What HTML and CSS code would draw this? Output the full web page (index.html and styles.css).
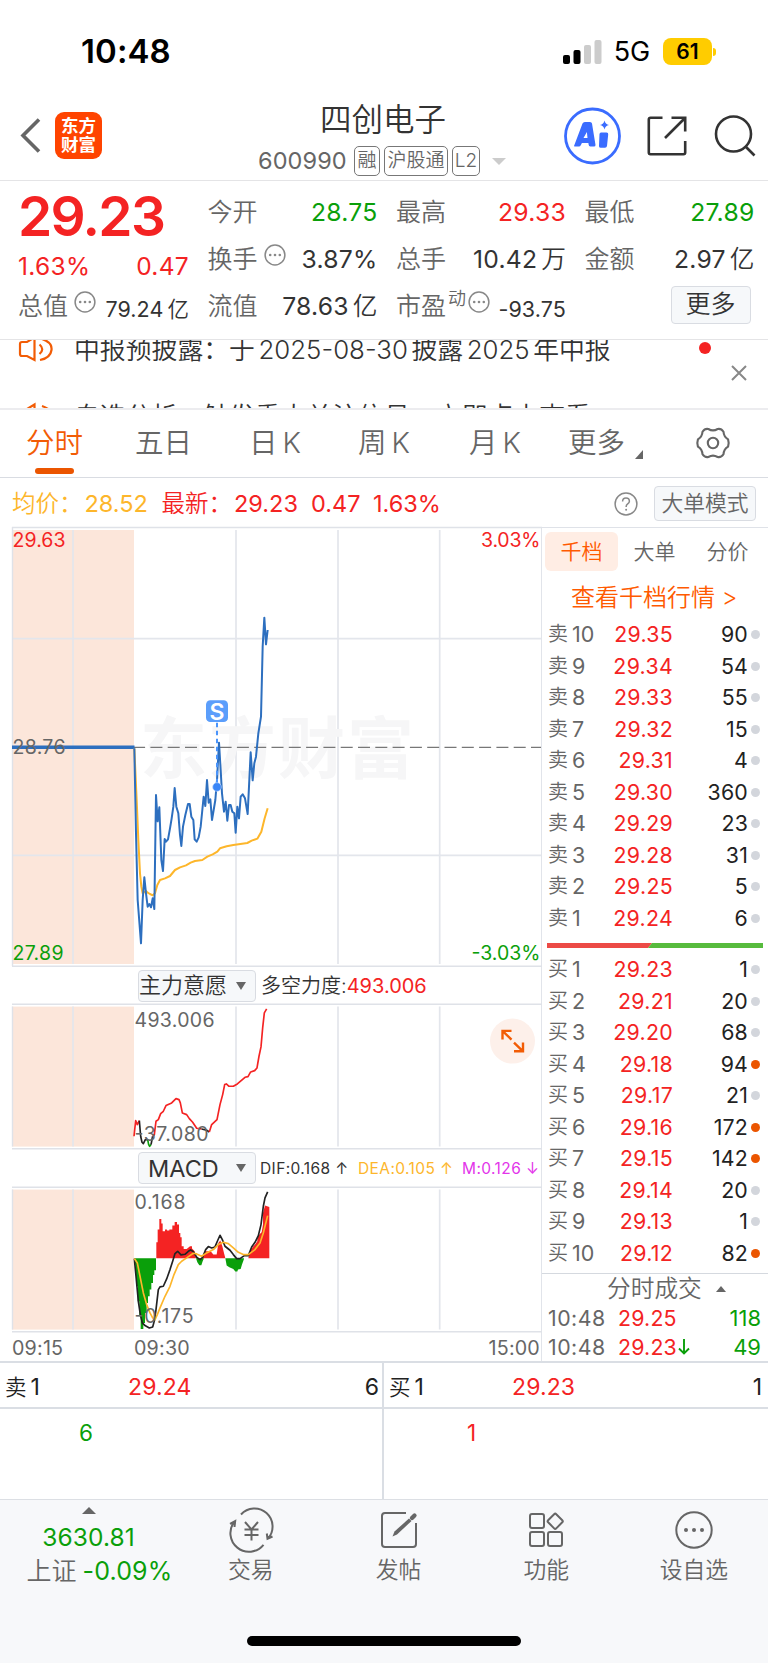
FILE: index.html
```html
<!DOCTYPE html>
<html lang="zh-CN">
<head>
<meta charset="utf-8">
<title>四创电子 600990</title>
<link rel="stylesheet" href="styles.css">
</head>
<body>
<div class="app">
  <div class="status">
    <span class="clock">10:48</span>
    <svg class="signal" width="40" height="26" viewBox="0 0 40 26"><rect x="1" y="16" width="7" height="9" rx="2"/><rect x="11.500" y="11" width="7" height="14" rx="2"/><rect class="dim" x="22" y="6" width="7" height="19" rx="2"/><rect class="dim" x="32.500" y="1" width="7" height="24" rx="2"/></svg>
    <span class="net">5G</span>
    <span class="battery">61</span><i class="battery-cap"></i>
  </div>

  <header class="head">
    <div class="head-left">
      <svg width="22" height="36" viewBox="0 0 22 36" fill="none" stroke="#666" stroke-width="3.6"><path d="M20 1.500 4 17.500l16 16"/></svg>
      <div class="logo"><span>东方</span><span>财富</span></div>
    </div>
    <div class="head-mid">
      <div class="name">四创电子</div>
      <div class="code-row"><span class="code">600990</span><span class="tag t1">融</span><span class="tag t2">沪股通</span><span class="tag t3">L2</span><i class="tri-down"></i></div>
    </div>
    <div class="head-right">
      <svg width="58" height="58" viewBox="0 0 58 58"><circle cx="29.500" cy="29" r="27" fill="none" stroke="#3a6cff" stroke-width="2.800"/><path fill="#3a6cff" fill-rule="evenodd" d="M11 39 19.500 16.500q.7-1.500 2.300-1.500H27q1.700 0 2 1.500L32.500 38q0 1.500-1.500 1.500h-3.600q-1.600 0-1.800-2l-.2-1.500h-6.500l-1 2q-.7 1.500-2 1.500H12q-1.500 0-1-1.500ZM20.500 31h4l-.6-6ZM38 25.500h5.500q2 0 1.700 2L44 39q-.3 1.700-2 1.700h-4.500q-1.800 0-1.500-1.900L36.500 27q.2-1.500 1.500-1.500ZM41.500 13.500q.8 3.700 4.500 4.500-3.700.8-4.500 4.500-.8-3.700-4.500-4.500 3.700-.8 4.500-4.500Z"/></svg>
      <svg width="42" height="42" viewBox="0 0 42 42" fill="none" stroke="#333" stroke-width="2.600"><path d="M16.500 2.800H4.500Q2.800 2.800 2.800 4.500V37.500q0 1.700 1.700 1.700H37.500q1.700 0 1.700-1.700V26M25.500 2.800H39.200V16.500M38.500 3.500 19 23"/></svg>
      <svg width="42" height="42" viewBox="0 0 42 42" fill="none" stroke="#333" stroke-width="2.600"><circle cx="19.500" cy="19" r="17.500"/><path d="M31.500 31.500 40.500 40.500"/></svg>
    </div>
  </header>

  <section class="quote">
    <div class="q-price">
      <div class="big red">29.23</div>
      <div class="cell mid red"><span>1.63%</span><span>0.47</span></div>
      <div class="cell"><label>总值</label><svg class="info" width="22" height="22" viewBox="0 0 22 22"><use href="#more-dots"/></svg><b class="small">79.24<em>亿</em></b></div>
    </div>
    <div class="q-col">
      <div class="cell"><label>今开</label><b class="green">28.75</b></div>
      <div class="cell"><label>换手</label><svg class="info" width="22" height="22" viewBox="0 0 22 22"><use href="#more-dots"/></svg><b>3.87%</b></div>
      <div class="cell"><label>流值</label><b>78.63<em>亿</em></b></div>
    </div>
    <div class="q-col">
      <div class="cell"><label>最高</label><b class="red">29.33</b></div>
      <div class="cell"><label>总手</label><b>10.42<em>万</em></b></div>
      <div class="cell"><label>市盈</label><sup>动</sup><svg class="info tight" width="22" height="22" viewBox="0 0 22 22"><g id="more-dots"><circle cx="11" cy="11" r="9.900" fill="none" stroke="#888" stroke-width="1.500"/><g fill="#888"><circle cx="6.200" cy="11" r="1.300"/><circle cx="11" cy="11" r="1.300"/><circle cx="15.800" cy="11" r="1.300"/></g></g></svg><b class="small">-93.75</b></div>
    </div>
    <div class="q-col">
      <div class="cell"><label>最低</label><b class="green">27.89</b></div>
      <div class="cell"><label>金额</label><b>2.97<em>亿</em></b></div>
      <div class="cell end"><button class="more-btn">更多</button></div>
    </div>
  </section>

  <section class="notice">
    <div class="notice-row"><svg class="horn" width="36" height="26" viewBox="0 0 36 26"><g id="horn" fill="none" stroke="#f25c05" stroke-width="2.200"><path d="M16.500 1.500V24L9 20H4Q2 20 2 18V8Q2 6 4 6H9ZM21.500 8.500q5.500 4.500 0 9.500M24 3q10.500 3.500 9.500 11-1 8-11.500 10"/></g></svg><p>中报预披露：于<i class="gap"></i>2025-08-30<i class="gap"></i>披露<i class="gap"></i>2025<i class="gap"></i>年中报</p></div>
    <div class="notice-row"><svg class="horn" width="36" height="26" viewBox="0 0 36 26"><use href="#horn"/></svg><p>自选分析：触发重大关注信号，立即点击查看</p></div>
    <i class="dot-red"></i>
    <svg class="close" width="18" height="18" viewBox="0 0 18 18" stroke="#888" stroke-width="2"><path d="M2 2 16 16M16 2 2 16"/></svg>
  </section>

  <nav class="tabs">
    <span class="tab on">分时</span><span class="tab">五日</span><span class="tab">日 K</span><span class="tab">周 K</span><span class="tab">月 K</span><span class="tab more">更多<i></i></span>
    <svg width="34" height="34" viewBox="-17 -17 34 34" fill="none" stroke="#666" stroke-width="2.100"><circle r="5.200"/><path d="M15.070 3.600Q10.800 6.230 10.500 11.200Q8.150 14.800 4.600 14Q0 11.300-4.600 14Q-8.150 14.800-10.500 11.200Q-10.800 6.230-15.070 3.600Q-16.300 0-15.070-3.600Q-10.800-6.230-10.500-11.200Q-8.150-14.800-4.600-14Q0-11.300 4.600-14Q8.150-14.800 10.500-11.200Q10.800-6.230 15.070-3.600Q16.300 0 15.070 3.600Z"/></svg>
  </nav>

  <div class="avg">
    <span class="yellow">均价：</span><span class="yellow v1">28.52</span><span class="red l2">最新：</span><span class="red v2">29.23</span><span class="red v3">0.47</span><span class="red v4">1.63%</span>
    <svg width="24" height="24" viewBox="0 0 24 24"><circle cx="12" cy="12" r="10.900" fill="none" stroke="#888" stroke-width="1.500"/><path d="M8.600 9.600q0-3.600 3.400-3.600t3.400 3.200q0 1.500-1.700 2.700-1.600 1.200-1.600 3" fill="none" stroke="#888" stroke-width="1.500"/><circle cx="12.100" cy="17.800" r="1" fill="#888"/></svg>
    <button class="mode">大单模式</button>
  </div>

  <main class="board">
    <div class="charts">
      <svg class="plot" width="542" height="440" viewBox="0 527 542 440">
        <rect class="pre" x="12" y="530" width="122" height="434"/>
        <g class="grid"><path d="M73 530V964M236 530V964M338 530V964M439.700 530V964M12 638.600H541M12 855.300H541"/><path class="frame" d="M12 527.500H542M12.500 527V966M12 966.200H542"/></g>
        <text class="mark" x="140" y="773" textLength="274">东方财富</text>
        <path d="M12 747.300H541" stroke="#777" stroke-width="1.300" stroke-dasharray="12 5.300" fill="none"/>
        <path d="M12 747.300H134.500" stroke="#2d6fbf" stroke-width="3.600"/>
        <text class="ax gray" x="12.500" y="753.500" textLength="53">28.76</text>
        <g transform="translate(120 600) scale(.33333)" fill="none" stroke-linejoin="round">
          <polyline stroke="#fdb62b" stroke-width="6" points="43,445 50,600 55,720 60,820 64,860 68,880 78,873 83,878 90,882 98,886 105,880 112,855 120,840 135,835 150,828 165,810 180,802 198,796 212,788 225,783 247,780 262,770 278,763 292,755 300,745 320,739 340,735 382,729 395,722 412,716 424,695 434,655 443,625"/>
          <polyline stroke="#2d6fbf" stroke-width="6" stroke-linejoin="round" points="43,445 48,700 53,900 63,1030 68,900 73,832 78,880 83,920 88,912 93,922 98,895 103,927 108,585 113,664 118,622 124,780 129,813 134,717 138,725 144,718 150,685 155,655 160,620 164,564 169,620 175,640 180,705 184,738 189,680 196,645 204,612 209,612 214,650 220,660 224,718 230,725 236,712 242,680 247,630 251,590 256,618 261,540 266,608 271,598 276,660 281,630 286,600 291,540 297,428 302,510 306,580 312,635 317,605 322,662 327,615 332,615 337,635 343,640 347,698 352,620 357,655 362,590 368,583 375,595 383,642 387,560 392,457 398,541 403,490 408,470 415,400 423,350 428,140 433,53 438,133 443,90"/>
          <path d="M291 368V550" stroke="#4a94fb" stroke-width="6" stroke-dasharray="14 10"/>
          <circle cx="291" cy="561" r="13" fill="#3a86f7" stroke="#b9d5fd" stroke-width="2"/>
          <rect x="258" y="301" width="66" height="65" rx="13" fill="#5b9efb"/>
        </g>
        <text class="s" x="217" y="719.500" text-anchor="middle">S</text>
        <text class="ax f-red" x="12.500" y="547.300" textLength="53">29.63</text>
        <text class="ax f-red" x="481" y="547.300" textLength="59.500">3.03%</text>
        <text class="ax f-green" x="12.500" y="959.500" textLength="51">27.89</text>
        <text class="ax f-green" x="471.500" y="959.500" textLength="69">-3.03%</text>
      </svg>
      <div class="ind"><button class="pick">主力意愿<i></i></button><span class="force">多空力度:<span class="red">493.006</span></span></div>
      <svg class="plot" width="542" height="146" viewBox="0 1003.400 542 146">
        <rect class="pre" x="12" y="1007" width="122" height="140"/>
        <g class="grid"><path d="M73 1007V1147M236 1007V1147M338 1007V1147M439.700 1007V1147"/><path class="frame" d="M12 1004.600H542M12.500 1007V1147M12 1149.200H542"/></g>
        <g transform="translate(0 940) scale(.33333)" fill="none" stroke-width="5" stroke-linejoin="round">
          <polyline stroke="#f42323" points="402,590 407,543 412,555 418,543"/>
          <polyline stroke="#222" points="418,543 422,590 426,608 430,612 436,600 443,600"/>
          <polyline stroke="#0a9f0a" points="443,600 446,615 449,620 453,615"/>
          <polyline stroke="#222" points="453,615 458,590"/>
          <polyline stroke="#f42323" points="458,590 463,585 468,545 475,540 482,522 490,515 498,498 515,490 528,477 537,480 541,490 547,520 560,525 568,537 578,548 590,566 605,568"/>
          <polyline stroke="#222" points="605,568 620,572 628,577"/>
          <polyline stroke="#f42323" points="628,577 635,555 651,540 660,495 668,465 674,435 679,433 687,440 700,440 712,433 735,413 744,411 752,397 764,393 771,385 777,350 783,322 788,265 793,220 800,208"/>
        </g>
        <text class="ax gray" x="134.500" y="1027" textLength="80">493.006</text>
        <text class="ax gray" x="134.500" y="1141" textLength="74">-37.080</text>
        <g class="expand"><circle cx="512.500" cy="1041.500" r="22.500" fill="#fdf0ea"/><path d="M511.500 1031.300H502.500V1040M502.500 1031.300 511.500 1040M514 1051.700H523V1043M523 1051.700 514 1043" fill="none" stroke="#f25c05" stroke-width="2.400"/></g>
      </svg>
      <div class="ind second"><button class="pick macd">MACD<i></i></button><span class="m m1">DIF:0.168 ↑</span><span class="m m2">DEA:0.105 ↑</span><span class="m m3">M:0.126 ↓</span></div>
      <svg class="plot" width="542" height="146" viewBox="0 1186.400 542 146">
        <rect class="pre" x="12" y="1190" width="122" height="140"/>
        <g class="grid"><path d="M73 1190V1330M236 1190V1330M338 1190V1330M439.700 1190V1330"/><path class="frame" d="M12 1187.600H542M12.500 1190V1330M12 1332.200H542"/></g>
        <g transform="translate(0 940) scale(.33333)" stroke-linejoin="round">
          <path fill="#0a9f0a" d="M403 956H468V992H463V1006H459V1030H454V1050H449V1070H444V1090H440V1120H435V1150H430V1168H422V1130H418V1085H413V1040H408V990ZM588 956 592 968 598 977H604L608 965 612 956ZM676 956 680 978 688 983 700 988 706 996H712L714 990 722 988 726 975 732 958V956Z"/>
          <path fill="#f42323" d="M469 956V908H473V870H478V838H484V852H488V875H495V870H501V873H508V870H517V858H524V847H531V855H537V880H541V893H545V920H551V928H560L570 920H576V927L584 935 588 956ZM608 956V948L615 935H632L640 945H650L655 910 661 903 667 920 672 940 676 956ZM745 956 750 935 760 920 765 915 772 905V895L778 885 785 878 789 855V820L795 798 808 802V956Z"/>
          <polyline fill="none" stroke="#222" stroke-width="5" points="403,957 408,1010 415,1085 421,1125 427,1150 435,1158 448,1165 458,1162 464,1140 468,1110 475,1050 480,1042 490,1040 500,1018 510,990 518,965 525,942 533,935 543,946 555,944 565,935 572,931 580,936 590,953 600,960 608,953 617,930 625,921 635,925 645,922 652,905 660,887 667,900 675,920 690,932 700,945 710,957 720,957 733,948 745,948 755,922 765,908 775,888 783,855 790,800 795,775 803,757"/>
          <polyline fill="none" stroke="#fdb62b" stroke-width="5" points="403,957 412,970 420,1010 430,1060 440,1095 450,1120 458,1135 465,1140 472,1125 480,1105 495,1070 510,1040 522,1005 535,975 545,965 560,955 580,941 590,943 605,950 620,940 640,930 655,915 670,908 685,912 700,925 715,938 730,945 745,945 765,930 780,910 790,880 803,828"/>
        </g>
        <text class="ax gray" x="134.500" y="1209.500" textLength="51">0.168</text>
        <text class="ax gray" x="134.500" y="1323.500" textLength="59">-0.175</text>
      </svg>
      <div class="times"><span>09:15</span><span>09:30</span><span>15:00</span></div>
    </div>

    <aside class="book">
      <div class="book-tabs"><span class="on">千档</span><span>大单</span><span>分价</span></div>
      <a class="link">查看千档行情 &gt;</a>
      <div class="levels">
        <div><span>卖<u>10</u></span><b>29.35</b><em>90</em><i></i></div>
        <div><span>卖<u>9</u></span><b>29.34</b><em>54</em><i></i></div>
        <div><span>卖<u>8</u></span><b>29.33</b><em>55</em><i></i></div>
        <div><span>卖<u>7</u></span><b>29.32</b><em>15</em><i></i></div>
        <div><span>卖<u>6</u></span><b>29.31</b><em>4</em><i></i></div>
        <div><span>卖<u>5</u></span><b>29.30</b><em>360</em><i></i></div>
        <div><span>卖<u>4</u></span><b>29.29</b><em>23</em><i></i></div>
        <div><span>卖<u>3</u></span><b>29.28</b><em>31</em><i></i></div>
        <div><span>卖<u>2</u></span><b>29.25</b><em>5</em><i></i></div>
        <div><span>卖<u>1</u></span><b>29.24</b><em>6</em><i></i></div>
      </div>
      <svg class="ratio" width="216" height="5" viewBox="0 0 216 5"><path fill="#ec4a46" d="M0 0H105L101 5H0Z"/><path fill="#57bb3d" d="M105 0H216V5H101Z"/></svg>
      <div class="levels buy">
        <div><span>买<u>1</u></span><b>29.23</b><em>1</em><i></i></div>
        <div><span>买<u>2</u></span><b>29.21</b><em>20</em><i></i></div>
        <div><span>买<u>3</u></span><b>29.20</b><em>68</em><i></i></div>
        <div><span>买<u>4</u></span><b>29.18</b><em>94</em><i class="hot"></i></div>
        <div><span>买<u>5</u></span><b>29.17</b><em>21</em><i></i></div>
        <div><span>买<u>6</u></span><b>29.16</b><em>172</em><i class="hot"></i></div>
        <div><span>买<u>7</u></span><b>29.15</b><em>142</em><i class="hot"></i></div>
        <div><span>买<u>8</u></span><b>29.14</b><em>20</em><i></i></div>
        <div><span>买<u>9</u></span><b>29.13</b><em>1</em><i></i></div>
        <div><span>买<u>10</u></span><b>29.12</b><em>82</em><i class="hot"></i></div>
      </div>
      <div class="deals">
        <div class="deals-title">分时成交<i></i></div>
        <div class="deal"><span>10:48</span><b>29.25</b><em>118</em></div>
        <div class="deal"><span>10:48</span><b>29.23<svg width="12" height="16" viewBox="0 0 12 16" fill="none" stroke="#0a9f0a" stroke-width="1.900"><path d="M6 0V14.500M1 9.500 6 14.500 11 9.500"/></svg></b><em>49</em></div>
      </div>
    </aside>
  </main>

  <section class="best">
    <div class="side"><div class="best-head"><span>卖<u>1</u></span><b>29.24</b><em>6</em></div><div class="best-body green">6</div></div>
    <div class="side"><div class="best-head"><span>买<u>1</u></span><b>29.23</b><em>1</em></div><div class="best-body red one">1</div></div>
  </section>

  <footer class="foot">
    <div class="index"><i></i><div class="green pts">3630.81</div><div class="chg">上证<span class="green">-0.09%</span></div></div>
    <div class="item"><svg width="44" height="40" viewBox="0 0 44 40" fill="none" stroke="#666" stroke-width="2"><path d="M12 4.500A18 18 0 0 1 39 28.500M43.500 26.500 38.500 28.800 37.800 23.500M34.500 34.800A18 18 0 0 1 5.500 11.500M1 13.800 6.200 11 5.500 17M16 12 22.500 19.500 29 12M22.500 19.500V30.500M15.500 19.500H29.500M15.500 25H29.500"/></svg><span>交易</span></div>
    <div class="item"><svg width="40" height="40" viewBox="0 0 40 40" fill="none" stroke="#666" stroke-width="2"><path d="M27 3H6Q3 3 3 6V34Q3 37 6 37H34Q37 37 37 34V13"/><path d="M13.500 26.500 15.500 21.500 30 8.500 32.500 11 18 24.500Z" fill="#666" stroke="none"/><path d="M33 8 35.500 5.500" stroke-width="4.300" stroke-linecap="round"/></svg><span>发帖</span></div>
    <div class="item"><svg width="40" height="40" viewBox="0 0 40 40" fill="none" stroke="#666" stroke-width="2"><rect x="4" y="4" width="14" height="14" rx="2"/><rect x="4" y="22" width="14" height="14" rx="2"/><rect x="22" y="22" width="14" height="14" rx="2"/><rect x="23.500" y="5.500" width="11.500" height="11.500" rx="1.500" transform="rotate(45 29.200 11.200)"/></svg><span>功能</span></div>
    <div class="item"><svg width="40" height="40" viewBox="0 0 40 40"><circle cx="20" cy="20" r="17.700" fill="none" stroke="#666" stroke-width="2"/><g fill="#666"><circle cx="12" cy="20" r="2"/><circle cx="20" cy="20" r="2"/><circle cx="28" cy="20" r="2"/></g></svg><span>设自选</span></div>
    <i class="home"></i>
  </footer>
</div>
</body>
</html>
```

FILE: styles.css
```css
* { box-sizing: border-box; }
body { margin: 0; background: #fff; }
i, em, b, u { font-style: normal; font-weight: 400; text-decoration: none; }
svg { display: block; flex: none; overflow: visible; }
.app { width: 768px; height: 1663px; display: flex; flex-direction: column; overflow: hidden; font-family: Inter, "Noto Sans CJK SC", sans-serif; font-weight: 350; line-height: 1.25; color: #333; white-space: nowrap; }
.app > * { flex: none; }
b, em, u { font-weight: 400; }
.red { color: #f42323; }
.green { color: #0a9f0a; }
.yellow { color: #fdb62b; }
button { font: inherit; color: inherit; padding: 0; background: #f6f8fa; border: 1px solid #d9dce2; border-radius: 4px; display: flex; align-items: center; justify-content: center; }

/* status bar */
.status { height: 100px; padding: 3px 52px 0 81px; display: flex; align-items: center; color: #000; }
.clock { font-size: 33px; font-weight: 600; flex: 1; letter-spacing: .1px; }
.signal { margin-right: 12px; }
.signal .dim { fill: #ccc; }
.net { font-size: 27px; font-weight: 400; margin-right: 13px; letter-spacing: -.2px; padding-top: 1px; }
.battery { width: 49px; height: 27px; border-radius: 8px; background: #fc0; font-weight: 600; font-size: 21px; line-height: 27px; text-align: center; }
.battery-cap { width: 3px; height: 8px; margin-left: 1px; background: #fc0; border-radius: 0 3px 3px 0; }

/* title bar */
.head { height: 81px; display: grid; grid-template-columns: 258px 305px 1fr; border-bottom: 1px solid #e4e4e6; }
.head-left { display: flex; padding: 12px 0 0 19px; gap: 14px; }
.head-left svg { margin-top: 6px; }
.logo { width: 47px; height: 47px; border-radius: 9px; background: #ff4400; color: #fff; font-size: 17.500px; line-height: 19px; padding-top: 4px; display: flex; flex-direction: column; align-items: center; }
.logo span { font-weight: 700; }
.name { font-size: 31.500px; line-height: 36px; padding-left: 62px; margin-top: 2px; }
.code-row { display: flex; align-items: center; height: 30px; margin-top: 8px; color: #666; }
.code { font-size: 23.500px; width: 96px; font-weight: 400; letter-spacing: .1px; }
.tag { height: 30px; border: 1px solid #777; border-radius: 5px; font-size: 19px; line-height: 28px; text-align: center; margin-right: 4px; }
.t1 { width: 26px; } .t2 { width: 64px; } .t3 { width: 28px; }
.tri-down { margin-left: 8px; border: 7px solid transparent; border-top-color: #ccc; border-bottom: 0; }
.head-right { display: flex; padding: 7px 0 0; }
.head-right svg:nth-child(2) { margin: 8px 0 0 25px; }
.head-right svg:nth-child(3) { margin: 8px 0 0 26px; }

/* quote summary */
.quote { height: 159px; padding: 8px 12px 0 18px; display: grid; grid-template-columns: 171px 170px 170px 170px; column-gap: 18.500px; border-bottom: 1px solid #e4e4e6; }
.cell { height: 47px; display: flex; align-items: center; font-size: 25px; }
.cell label { color: #666; }
.cell b { margin-left: auto; font-size: 24.700px; letter-spacing: .25px; }
.cell em { font-weight: 350; margin-left: 4px; letter-spacing: 0; }
.cell .small { font-size: 21.500px; letter-spacing: .1px; padding-top: 6px; }
.cell b:not(.small) em { margin-left: 4px; }
.cell.mid { justify-content: space-between; height: 34px; font-weight: 400; letter-spacing: .3px; font-size: 24.500px; }
.cell.end { justify-content: flex-end; padding-right: 4px; }
.big { font-size: 55px; font-weight: 600; line-height: 54px; height: 60px; letter-spacing: -1.700px; }
.info { margin: -10px 0 0 6px; }
.info.tight { margin-left: 2px; }
.cell sup { font-size: 18px; line-height: 20px; color: #666; margin-top: -16px; margin-left: 2px; vertical-align: baseline; }
.more-btn { width: 80px; height: 38px; font-size: 25px; margin-top: -4px; }

/* scrolling notice */
.notice { height: 70px; overflow: hidden; position: relative; border-bottom: 2px solid #ececef; }
.notice-row { height: 67px; display: flex; align-items: center; padding-left: 18px; position: relative; top: -23.500px; font-size: 25.850px; }
.notice-row p { margin: 0 0 0 20px; }
.notice-row svg { margin-top: -2px; }
.notice-row .gap { display: inline-block; width: 3.500px; }
.dot-red { position: absolute; left: 699px; top: 2px; width: 12px; height: 12px; border-radius: 50%; background: #f42323; }
.close { position: absolute; left: 730px; top: 24px; }

/* period tabs */
.tabs { height: 68px; border-bottom: 1px solid #d9dce2; display: flex; align-items: center; padding: 0 0 2px 26px; font-size: 28.500px; color: #666; }
.tab { width: 112px; word-spacing: -3px; padding-top: 1px; }
.tab:nth-child(2) { width: 114px; }
.tab:nth-child(3) { width: 109px; }
.tab:nth-child(4) { width: 111px; }
.tab:nth-child(5) { width: 99px; }
.tab.on { width: 109px; color: #f25c05; position: relative; }
.tab.on::after { content: ""; position: absolute; left: 9px; bottom: -13px; width: 39px; height: 6px; border-radius: 3px; background: #eb5500; }
.tab.more { width: 128px; display: flex; align-items: flex-end; }
.tab.more i { margin: 0 0 2px 10px; border-left: 8px solid transparent; border-bottom: 9px solid #666; }

/* average price row */
.avg { height: 49px; display: flex; align-items: center; padding: 2px 12px 0; font-size: 23.500px; }
.avg span { flex: none; letter-spacing: 0; }
.avg .v1 { width: 77px; } .avg .v2 { width: 77px; } .avg .v3 { width: 62px; } .avg .v4 { flex: 1; }
.avg span:nth-child(1), .avg .l2 { width: 72.500px; }
.avg .v1, .avg .v2, .avg .v3, .avg .v4 { font-weight: 400; letter-spacing: 0; }
.avg svg { margin-right: 16px; }
.mode { width: 102px; height: 35px; font-size: 21.800px; color: #666; }

/* charts */
.board { height: 834px; display: flex; }
.charts { width: 542px; display: flex; flex-direction: column; border-right: 1px solid #e1e4ea; }
.pre { fill: #fce6da; }
.grid { fill: none; stroke: #e3e6ec; stroke-width: 1.700; }
.grid .frame { stroke: #dfe2e8; stroke-width: 1.400; }
.plot text { font-family: Inter, "Noto Sans CJK SC", sans-serif; }
.ax { font-size: 19.500px; font-weight: 400; }
.gray { fill: #666; }
.f-red { fill: #f42323; }
.f-green { fill: #0a9f0a; }
.mark { font-size: 67px; font-weight: 700; fill: #f6f6f7; }
.s { font-size: 23px; font-weight: 600; fill: #fff; }
.ind { height: 37px; display: flex; align-items: center; padding: 2px 0 0 138px; }
.pick { width: 118px; height: 32px; font-size: 22px; justify-content: flex-start; }
.pick i { margin-left: 9px; border: 5px solid transparent; border-top: 8px solid #666; border-bottom: 0; }
.pick.macd { font-weight: 400; font-size: 23.500px; padding-left: 9px; }
.pick.macd i { margin-left: auto; margin-right: 9px; }
.force { margin-left: 5px; font-size: 20px; }
.force .red { font-weight: 400; }
.m { font-size: 15.500px; font-weight: 400; letter-spacing: .4px; }
.m1 { margin-left: 4px; width: 98px; }
.m2 { color: #fdb62b; width: 104px; }
.m3 { color: #e335ea; }
.times { height: 30px; display: flex; align-items: center; padding: 4px 1px 0 12px; font-size: 19.700px; color: #666; font-weight: 400; letter-spacing: .2px; }
.times span:nth-child(1) { width: 122px; }
.times span:nth-child(2) { flex: 1; }

/* order book */
.book { width: 226px; border-top: 1px solid #dfe2e8; font-size: 21.300px; }
.book-tabs { display: flex; height: 39px; margin: 4px 0 0 3px; color: #666; line-height: 39px; font-size: 21px; }
.book-tabs span { width: 73px; text-align: center; border-radius: 6px; }
.book-tabs .on { background: #ffede4; color: #ff5a00; }
.link { display: block; height: 48px; line-height: 53px; padding-left: 29px; font-size: 24px; color: #ff5a00; }
.levels div { height: 31.500px; display: flex; align-items: center; padding-left: 6px; }
.levels span { width: 61px; color: #666; display: flex; align-items: center; gap: 4px; font-size: 20px; }
.levels u { font-size: 21.500px; }
.levels b { width: 64px; text-align: right; color: #f42323; letter-spacing: .3px; }
.levels em { width: 75px; text-align: right; color: #222; letter-spacing: .2px; }
.levels i { width: 9px; height: 9px; border-radius: 50%; background: #d3d6dc; margin-left: 3px; }
.levels .hot { background: #eb5500; }
.ratio { margin: 9px 0 6px 5px; }
.deals { border-top: 1px solid #d5d9df; margin-top: 4px; }
.deals-title { height: 30px; padding-left: 65px; display: flex; align-items: center; font-size: 23.700px; color: #666; }
.deals-title i { margin-left: 14px; border: 5px solid transparent; border-bottom: 6px solid #666; border-top: 0; }
.deal { height: 29px; display: flex; align-items: center; padding: 0 7px 0 6px; }
.deal span { width: 70px; color: #666; font-weight: 400; letter-spacing: .5px; }
.deal b { flex: 1; color: #f42323; display: flex; align-items: center; gap: 1px; letter-spacing: .2px; }
.deal em { color: #0a9f0a; font-size: 22px; }

/* best bid / ask */
.best { height: 138px; display: flex; border-top: 2px solid #dadee4; }
.side { width: 384px; }
.side:first-child { border-right: 2px solid #dadee4; }
.best-head { height: 46px; border-bottom: 2px solid #dadee4; display: flex; align-items: center; padding: 4px 3px 0 5px; font-size: 23px; color: #222; }
.best-head span { width: 123px; display: flex; align-items: center; gap: 4px; font-size: 21.500px; }
.best-head u { font-size: 23px; }
.best-head b { color: #f42323; flex: 1; letter-spacing: .1px; }
.side:last-child .best-head { padding: 4px 6px 0 5px; }
.best-body { padding-left: 79px; height: 50px; line-height: 47px; font-size: 22.500px; font-weight: 400; }
.best-body.one { padding-left: 83px; }

/* bottom bar */
.foot { height: 165px; background: #f7f8fa; border-top: 1px solid #dcdfe4; display: flex; position: relative; color: #666; font-size: 22.800px; }
.index { width: 177px; display: flex; flex-direction: column; align-items: center; padding-top: 7px; }
.index i { border: 7px solid transparent; border-bottom: 7px solid #666; border-top: 0; }
.pts { font-size: 24.500px; line-height: 34px; font-weight: 400; margin-top: 6px; letter-spacing: .1px; }
.chg { font-size: 25px; line-height: 34px; display: flex; gap: 6px; padding-left: 22px; }
.chg span { font-weight: 400; letter-spacing: .15px; }
.item { width: 147.700px; display: flex; flex-direction: column; align-items: center; padding-top: 10px; }
.item span { margin-top: 3px; line-height: 34px; }
.home { position: absolute; left: 247px; top: 136px; width: 274px; height: 10px; border-radius: 5px; background: #000; }
```
